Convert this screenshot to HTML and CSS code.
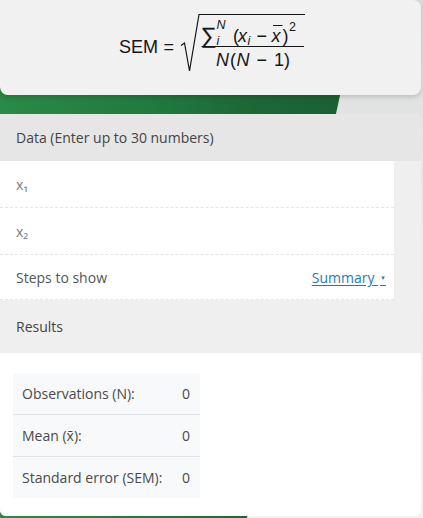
FILE: index.html
```html
<!DOCTYPE html>
<html lang="en">
<head>
<meta charset="utf-8">
<title>Standard Error of the Mean</title>
<link rel="stylesheet" href="styles.css">
</head>
<body>
<div class="app">
  <div class="formula-card">
    <svg class="formula" width="220" height="80" viewBox="100 7 220 80" xmlns="http://www.w3.org/2000/svg">
      <text x="118" y="53" class="f">SEM</text>
      <text x="162.5" y="53" class="f">=</text>
      <polyline points="180,45.5 183.5,43 188.5,71 198,14.5 304,14.5" class="rad"/>
      <line x1="200.5" y1="46.5" x2="303" y2="46.5" class="bar"/>
      <text x="200" y="42.5" class="sum">∑</text>
      <text x="215.5" y="29" class="s it">N</text>
      <text x="215.5" y="45" class="s it">i</text>
      <text x="232" y="42" class="f">(</text>
      <text x="237" y="42" class="f it">x</text>
      <text x="246.5" y="45" class="s it">i</text>
      <text x="255.5" y="42" class="f">−</text>
      <text x="270.5" y="42" class="f it">x</text>
      <line x1="272" y1="25.5" x2="281.5" y2="25.5" class="ov"/>
      <text x="281.5" y="42" class="f">)</text>
      <text x="288" y="31" class="s">2</text>
      <text x="215" y="66" class="f it">N</text>
      <text x="229" y="66" class="f">(</text>
      <text x="235.5" y="66" class="f it">N</text>
      <text x="255.5" y="66" class="f">−</text>
      <text x="273" y="66" class="f">1</text>
      <text x="283" y="66" class="f">)</text>
    </svg>
  </div>

  <div class="panel">
    <div class="panel-head">Data (Enter up to 30 numbers)</div>
    <div class="inputs">
      <div class="row"><span class="ph">x₁</span></div>
      <div class="row"><span class="ph">x₂</span></div>
      <div class="row row-steps">
        <span class="lbl">Steps to show</span>
        <a class="link" href="#">Summary <span class="caret">▼</span></a>
      </div>
    </div>
    <div class="results-head">Results</div>
    <div class="results-body">
      <table class="res">
        <tr><td class="k">Observations (N):</td><td class="v">0</td></tr>
        <tr><td class="k">Mean (x̄):</td><td class="v">0</td></tr>
        <tr><td class="k">Standard error (SEM):</td><td class="v">0</td></tr>
      </table>
    </div>
  </div>
</div>
</body>
</html>
```
FILE: styles.css
```css
html, body {
  margin: 0;
  padding: 0;
}
body {
  width: 423px;
  height: 518px;
  overflow: hidden;
  position: relative;
  background: linear-gradient(180deg, #dadbdb 0%, #e9e9e9 40%, #f2f2f2 100%);
  font-family: "Open Sans", "Noto Sans", sans-serif;
}
body::before {
  content: "";
  position: absolute;
  inset: 0;
  clip-path: polygon(0 0, 361px 0, 247px 518px, 0 518px);
  background: linear-gradient(90deg, #2a8a47 0%, #217a3f 35%, #1d6735 60%, #1b5a2f 100%);
}
.app {
  position: relative;
  width: 421px;
}
.formula-card {
  height: 95px;
  background: #f1f1f1;
  border-radius: 0 8px 8px 8px;
  box-shadow: 0 2px 5px rgba(0, 0, 0, 0.16);
  display: flex;
  justify-content: center;
}
.formula {
  display: block;
  margin-top: 7px;
}
.formula .f {
  font-family: "Liberation Sans", Arial, sans-serif;
  font-size: 18px;
  fill: #161616;
}
.formula .sum {
  font-family: "Liberation Sans", Arial, sans-serif;
  font-size: 22px;
  fill: #161616;
  stroke: #161616;
  stroke-width: 0.3;
}
.formula .s {
  font-family: "Liberation Sans", Arial, sans-serif;
  font-size: 12.5px;
  fill: #161616;
}
.formula .it {
  font-style: italic;
}
.formula .rad {
  fill: none;
  stroke: #161616;
  stroke-width: 1.2;
  stroke-linejoin: miter;
}
.formula .bar,
.formula .ov {
  stroke: #161616;
  stroke-width: 1;
}
.panel {
  margin-top: 19px;
  height: 402px;
  background: #efefef;
  border-radius: 0 6px 6px 6px;
  overflow: hidden;
  display: flex;
  flex-direction: column;
}
.panel-head {
  height: 47px;
  flex: none;
  background: #e6e6e6;
  display: flex;
  align-items: center;
  padding-left: 16px;
  color: #444;
  font-size: 14px;
}
.inputs {
  width: 394px;
  background: #fff;
}
.row {
  box-sizing: border-box;
  height: 47px;
  border-bottom: 1px dashed #e4e4e4;
  display: flex;
  align-items: center;
  justify-content: space-between;
  padding: 0 8px 0 16px;
  font-size: 14px;
}
.row-steps {
  height: 45px;
}
.ph {
  color: #7a7a7a;
}
.lbl {
  color: #555;
}
.link {
  color: #1f7ab8;
  text-decoration: underline;
  text-underline-offset: 2px;
}
.caret {
  font-size: 6px;
  vertical-align: 3px;
  margin-left: 2px;
}
.results-head {
  height: 53px;
  flex: none;
  display: flex;
  align-items: center;
  padding-left: 16px;
  color: #444;
  font-size: 14px;
}
.results-body {
  flex: 1;
  background: #fff;
  padding: 20px 13px;
}
.res {
  width: 187px;
  border-collapse: collapse;
  background: #f8f9fa;
  font-size: 14px;
  color: #4a4a4a;
}
.res td {
  height: 41px;
  padding: 0;
  border-top: 1px solid #e1e3e6;
  white-space: nowrap;
}
.res tr:first-child td {
  border-top: none;
}
.res .k {
  padding-left: 9px;
}
.res .v {
  text-align: right;
  padding-right: 10px;
}
```
